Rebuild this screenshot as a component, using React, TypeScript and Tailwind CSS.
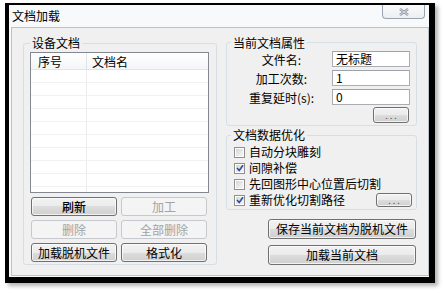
import React from "react";

const btnOn =
  "h-full rounded-[3px] border border-[#707070] bg-[linear-gradient(#f2f2f2,#ebebeb_50%,#dddddd_50%,#cfcfcf)] text-black shadow-[inset_0_0_0_1px_rgba(255,255,255,0.7)] leading-[14px]";
const btnOff =
  "h-full rounded-[3px] border border-[#c5c8cc] bg-[#f4f4f4] text-[#a3a3a3] leading-[14px]";

function Dots({ className }: { className: string }) {
  return (
    <div className={`${btnOn} flex items-center justify-center ${className}`}>
      <span className="text-[9px] leading-[9px] tracking-[2px] text-[#555] pl-[2px]">...</span>
    </div>
  );
}

function Check({ checked }: { checked?: boolean }) {
  return (
    <span className="w-[11px] h-[11px] border border-[#8e8f8f] bg-white p-[1px] flex shrink-0">
      <span className="flex-1 bg-[linear-gradient(135deg,#d6d6d6,#f7f7f7)] flex items-center justify-center">
        {checked && (
          <svg width="8" height="8" viewBox="0 0 8 8">
            <path d="M1 4 L3.2 6.4 L7 1.2" stroke="#2f4f9b" strokeWidth="1.6" fill="none" />
          </svg>
        )}
      </span>
    </span>
  );
}

function Field({ label, value }: { label: string; value: string }) {
  return (
    <div className="flex h-[16px] items-center">
      <span className="w-[101px] text-center leading-[12px] pt-[2px]">{label}</span>
      <div className="w-[78px] h-[16px] border border-[#abadb3] border-t-[#9ea2aa] bg-white pl-[3px] leading-[13px] text-[12px]">
        {value}
      </div>
    </div>
  );
}

function Option({ label, checked, more }: { label: string; checked?: boolean; more?: boolean }) {
  return (
    <div className="flex h-[16px] items-center">
      <span className="ml-[3px]">
        <Check checked={checked} />
      </span>
      <span className="ml-[4px] leading-[14px]">{label}</span>
      {more && <Dots className="ml-auto mr-[4px] !h-[14px] w-[36px]" />}
    </div>
  );
}

export default function App() {
  const rows = Array.from({ length: 10 });
  return (
    <div className="w-[443px] h-[293px] bg-white pt-[3px] pl-[5px] font-['Noto_Sans_CJK_SC',sans-serif] text-[12px] text-black">
      <div className="relative w-[430px] h-[280px] border-black border-l-4 border-t-2 border-r-[6px] border-b-[6px] bg-[#f8f9fb] shadow-[3px_3px_4px_rgba(0,0,0,0.3)] flex flex-col">
        {/* title */}
        <div className="h-[22px] pl-[3px] pt-[4px] leading-[14px]">文档加载</div>
        <div className="absolute right-[4px] top-0 w-[43px] h-[14px] rounded-b-[4px] border border-t-0 border-[#9aa4b0] bg-[linear-gradient(#fbfbfb,#eceef1)] flex items-center justify-center">
          <svg width="12" height="8" viewBox="0 0 12 8">
            <path d="M2 1 L10 7 M10 1 L2 7" stroke="#8a94a0" strokeWidth="2.4" />
            <path d="M2 1 L10 7 M10 1 L2 7" stroke="#eef0f3" strokeWidth="0.8" />
          </svg>
        </div>

        {/* client */}
        <div className="ml-[2px] h-[249px] border border-[#b9c3ce] bg-[#f0f0f0] flex pl-[11px] pt-[8px] gap-[9px]">
          {/* device documents */}
          <fieldset className="w-[194px] h-[229px] border border-[#d5dfe5] rounded-[3px] pl-[6px] flex flex-col">
            <legend className="px-[2px] leading-[14px] text-[12px]">设备文档</legend>
            <div className="mt-[2px] w-[179px] h-[141px] border border-[#828790] bg-white overflow-hidden">
              <div className="flex h-[17px] border-b border-[#e2e4e7] bg-[linear-gradient(#ffffff,#f4f5f7)] leading-[17px]">
                <span className="w-[56px] pl-[7px] border-r border-[#e2e4e7]">序号</span>
                <span className="pl-[5px]">文档名</span>
              </div>
              {rows.map((_, i) => (
                <div key={i} className="flex h-[13px] border-b border-[#f1f1f1]">
                  <span className="w-[56px] border-r border-[#ededed]" />
                </div>
              ))}
            </div>
            <div className="mt-[4px] ml-[1px] w-[176px] grid grid-cols-2 gap-x-[4px] gap-y-[4px] auto-rows-[19px]">
              <button className={`${btnOn} font-medium`}>刷新</button>
              <button className={btnOff}>加工</button>
              <button className={btnOff}>删除</button>
              <button className={btnOff}>全部删除</button>
              <button className={btnOn}>加载脱机文件</button>
              <button className={btnOn}>格式化</button>
            </div>
          </fieldset>

          {/* right column */}
          <div className="w-[191px] flex flex-col">
            <fieldset className="h-[90px] border border-[#d5dfe5] rounded-[3px] pl-[4px] flex flex-col">
              <legend className="px-[2px] leading-[13px] -mt-[3px]">当前文档属性</legend>
              <div className="flex flex-col gap-[3px] mt-[2px]">
                <Field label="文件名:" value="无标题" />
                <Field label="加工次数:" value="1" />
                <Field label="重复延时(s):" value="0" />
                <div className="flex justify-end pr-[7px] -mt-[1px]">
                  <Dots className="!h-[16px] w-[36px]" />
                </div>
              </div>
            </fieldset>

            <fieldset className="mt-[2px] h-[82px] border border-[#d5dfe5] rounded-[3px] pl-[4px] flex flex-col">
              <legend className="px-[2px] leading-[14px]">文档数据优化</legend>
              <div className="flex flex-col mt-[2px]">
                <Option label="自动分块雕刻" />
                <Option label="间隙补偿" checked />
                <Option label="先回图形中心位置后切割" />
                <Option label="重新优化切割路径" checked more />
              </div>
            </fieldset>

            <div className="mt-[9px] flex flex-col items-end gap-[6px] pr-[1px]">
              <button className={`${btnOn} !h-[20px] w-[148px]`}>保存当前文档为脱机文件</button>
              <button className={`${btnOn} !h-[20px] w-[148px]`}>加载当前文档</button>
            </div>
          </div>
        </div>
      </div>
    </div>
  );
}
